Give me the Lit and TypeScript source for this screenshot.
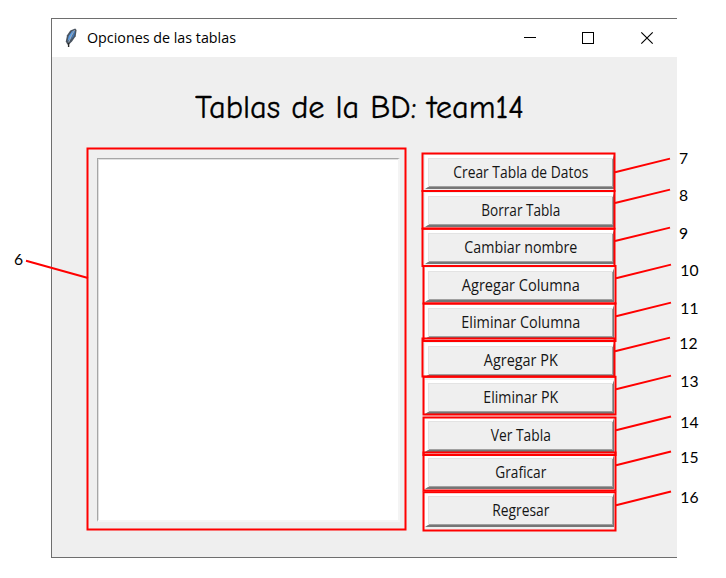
import { LitElement, html, svg, css } from "lit";
import { customElement } from "lit/decorators.js";

const ACTIONS: [string, number][] = [
  ["Crear Tabla de Datos", 135],
  ["Borrar Tabla", 79],
  ["Cambiar nombre", 113],
  ["Agregar Columna", 118],
  ["Eliminar Columna", 119],
  ["Agregar PK", 74],
  ["Eliminar PK", 75],
  ["Ver Tabla", 60],
  ["Graficar", 51],
  ["Regresar", 57],
];

// x, y, width, height of every marked area
const FRAMES = [
  [87.5, 148.5, 318, 381],
  [422.5, 153.5, 192, 37.5],
  [422.5, 191, 192, 37.5],
  [422.5, 228.8, 192, 37.2],
  [423.5, 266, 192, 37.5],
  [423.5, 303.5, 192, 37.5],
  [422.5, 338.5, 192, 38],
  [423.5, 376.8, 192, 37.7],
  [423.5, 417.5, 192, 37.5],
  [423.5, 452.5, 192, 38],
  [423.5, 492.2, 192, 38.3],
];

// label, text x, baseline, line start x/y, line end x/y
const CALLOUTS: [string, number, number, number, number, number, number][] = [
  ["6", 14, 265, 88, 278, 26, 260.7],
  ["7", 679, 164, 615, 172.2, 670, 158.6],
  ["8", 679, 201, 615, 203, 670, 189.6],
  ["9", 679, 239, 615, 241, 670, 227.6],
  ["10", 680.3, 276, 616, 278.2, 671, 264.6],
  ["11", 680.3, 314, 616, 316.2, 671, 302.6],
  ["12", 679.3, 349, 615, 351.2, 670, 337.6],
  ["13", 680.3, 387, 616, 389.2, 671, 375.6],
  ["14", 680.3, 427.5, 616, 430.2, 671, 416.5],
  ["15", 680.3, 463, 616, 465.2, 671, 451.5],
  ["16", 680.3, 503, 616, 505.2, 671, 491.5],
];

@customElement("app-root")
export class AppRoot extends LitElement {
  static styles = css`
    :host {
      display: block;
      position: relative;
      box-sizing: border-box;
      width: 726px;
      height: 578px;
      padding: 18px 0 0 51px;
      background: #fff;
      overflow: hidden;
      color: #000;
    }
    .window {
      box-sizing: border-box;
      width: 626px;
      height: 540px;
      border: 1px solid #6e6e6e;
      border-right: 0;
      background: #efefef;
      display: flex;
      flex-direction: column;
    }
    .titlebar {
      height: 38px;
      flex: none;
      background: #fff;
      display: flex;
      align-items: center;
    }
    .feather { width: 14px; height: 22px; margin: 0 9px 0 12px; flex: none; }
    .caption { width: 160px; height: 24px; flex: none; font: 15.3px "Open Sans", "Noto Sans", sans-serif; }
    .controls { margin-left: auto; width: 174px; height: 38px; }
    .heading { display: block; margin: 26px 0 0 143px; width: 335px; height: 45px; flex: none;
      font: 31.5px "Comic Sans MS", "Comic Neue", "Noto Sans", sans-serif; stroke: #000; stroke-width: .3px; }
    .content { display: flex; align-items: flex-start; margin: 27px 0 0 45px; }
    .list {
      box-sizing: border-box;
      width: 303px;
      height: 364px;
      margin-top: 3px;
      background: #fff;
      border: 1px solid #a6a6a6;
      border-right: 2px solid #f4f4f4;
      border-bottom: 2px solid #f6f6f6;
      box-shadow: inset 1px 1px 0 #e0e0e0;
    }
    .actions { display: grid; grid-auto-rows: 34px; row-gap: 3.5px; margin-left: 25px; width: 189px; }
    .action {
      box-sizing: border-box;
      padding: 0;
      border-style: solid;
      border-width: 3px 1px 2px 3px;
      border-color: #fff #767676 #767676 #fff;
      background: #efefef;
      box-shadow: inset 1px 1px 0 #e3e3e3, inset -1px -1px 0 #a0a0a0;
    }
    .label { display: block; width: 100%; height: 29px; font: 15.6px "Open Sans", "Noto Sans", sans-serif; fill: #151515; }
    .marks { position: absolute; inset: 0; pointer-events: none; font: 15.7px Lato, sans-serif; }
  `;

  render() {
    return html`
      <div class="window">
        <div class="titlebar">
          <svg class="feather" viewBox="0 0 14 22">
            <path d="M3.3 17.5 1.8 14.5 3 8.2 6.3 3.5 11.2 1.4 12.6 3 11.7 9.2 8 14.5 5 17.5Z" fill="#4a5460"/>
            <path d="M3.5 14.5 4.7 9 8 4.5 9.5 3.5 6.5 11Z" fill="#5b9ce2"/>
            <path d="M6.5 13 10.3 4 11.2 4.5 10 9Z" fill="#3f77b8"/>
            <path d="M4.3 16 7.5 8.8 10.5 3" stroke="#b2cbe5" stroke-width=".8" fill="none"/>
            <path d="M4.6 15.5V20" stroke="#292929" stroke-width="1.4"/>
          </svg>
          <svg class="caption"><text x="0" y="17" textLength="149" lengthAdjust="spacingAndGlyphs">Opciones de las tablas</text></svg>
          <svg class="controls" viewBox="0 0 174 38" fill="none" stroke="#000">
            <path d="M21 18.5H33" shape-rendering="crispEdges"/>
            <rect x="79.5" y="13.5" width="11" height="11" shape-rendering="crispEdges"/>
            <path d="m138.3 13.3 11.4 11.4m0-11.4-11.4 11.4" stroke-width="1.15"/>
          </svg>
        </div>
        <svg class="heading"><text x="0" y="35" textLength="329" lengthAdjust="spacingAndGlyphs">Tablas de la BD: team14</text></svg>
        <div class="content">
          <div class="list"></div>
          <div class="actions">
            ${ACTIONS.map(([name, width]) => html`
              <button class="action">
                <svg class="label" viewBox="0 0 185 29"><text x="92.8" y="20" text-anchor="middle" textLength=${width} lengthAdjust="spacingAndGlyphs">${name}</text></svg>
              </button>`)}
          </div>
        </div>
      </div>
      <svg class="marks" width="726" height="578">
        <g fill="none" stroke="#f00" stroke-width="2">
          ${FRAMES.map(([x, y, w, h]) => svg`<rect x=${x} y=${y} width=${w} height=${h}/>`)}
          ${CALLOUTS.map(([, , , x1, y1, x2, y2]) => svg`<path d=${`M${x1} ${y1}L${x2} ${y2}`}/>`)}
        </g>
        ${CALLOUTS.map(([label, x, y]) => svg`<text x=${x} y=${y}>${label}</text>`)}
      </svg>
    `;
  }
}
